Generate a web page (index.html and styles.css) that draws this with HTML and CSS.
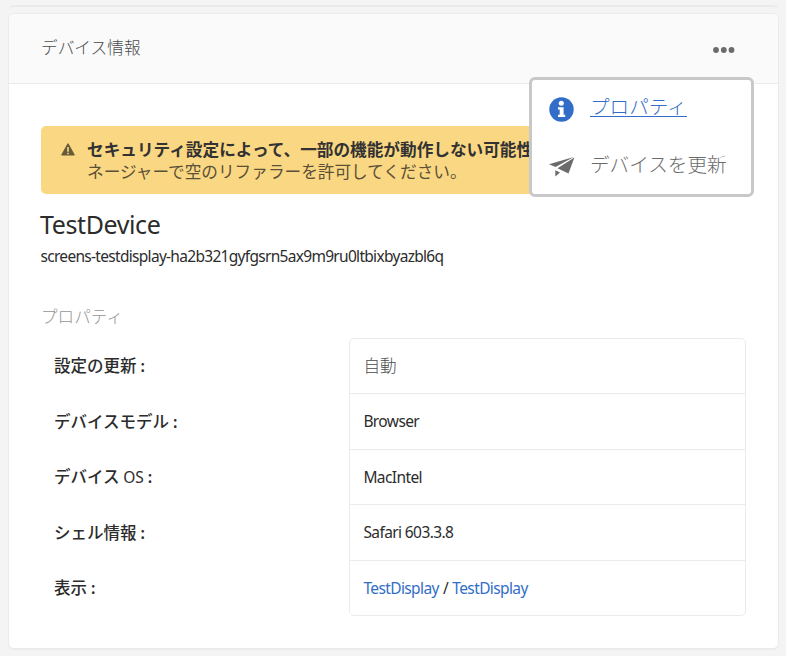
FILE: index.html
```html
<!DOCTYPE html>
<html lang="ja">
<head>
<meta charset="utf-8">
<title>デバイス情報</title>
<link rel="stylesheet" href="styles.css">
</head>
<body>
<div class="previous-card"></div>
<section class="card">
  <header class="card-header">
    <h2 class="card-title">デバイス情報</h2>
    <svg class="more" width="22" height="6" viewBox="0 0 22 6"><circle cx="3" cy="3" r="2.9"/><circle cx="10.8" cy="3" r="2.9"/><circle cx="18.5" cy="3" r="2.9"/></svg>
    <nav class="menu">
      <a class="menu-item active">
        <svg width="26" height="26" viewBox="0 0 26 26"><circle cx="12.5" cy="12.5" r="12.2" fill="#326ec8"/><circle cx="12.3" cy="6.3" r="2.5" fill="#fff"/><path d="M9 10.3h5.6v7.5h1.6V20H9v-2.200h1.700v-5.300H9z" fill="#fff"/></svg>
        <span class="menu-label">プロパティ</span>
      </a>
      <a class="menu-item">
        <svg width="26" height="26" viewBox="0 0 26 26"><path d="M0 10.3 24.700 3 6.600 13zM8.500 14.300 25.400 3.400 19.500 19.500zM6.200 16.200l4.800 2.300-4.600 4z" fill="#6b6b6b"/></svg>
        <span class="menu-label">デバイスを更新</span>
      </a>
    </nav>
  </header>
  <div class="card-body">
    <div class="alert">
      <svg class="alert-icon" width="14" height="13" viewBox="0 0 14 13"><path d="M6.400.700q.600-1 1.200 0l6 10.800q.500 1-.600 1H1q-1.100 0-.600-1z" fill="#665a38"/><path d="M6.200 4h1.600v4.700H6.200zM6.200 9.700h1.600v1.600H6.200z" fill="#fad782"/></svg>
      <div class="alert-text">
        <strong>セキュリティ設定によって、一部の機能が動作しない可能性</strong>
        <p>ネージャーで空のリファラーを許可してください。</p>
      </div>
    </div>
    <h1 class="device-name">TestDevice</h1>
    <p class="device-id">screens-testdisplay-ha2b321gyfgsrn5ax9m9ru0ltbixbyazbl6q</p>
    <h3 class="section-title">プロパティ</h3>
    <div class="properties">
      <div class="labels">
        <div class="label">設定の更新 :</div>
        <div class="label">デバイスモデル :</div>
        <div class="label">デバイス <span class="os">OS</span> :</div>
        <div class="label">シェル情報 :</div>
        <div class="label">表示 :</div>
      </div>
      <div class="values">
        <div class="value auto">自動</div>
        <div class="value">Browser</div>
        <div class="value">MacIntel</div>
        <div class="value">Safari 603.3.8</div>
        <div class="value links"><a>TestDisplay</a> / <a>TestDisplay</a></div>
      </div>
    </div>
  </div>
</section>
</body>
</html>
```

FILE: styles.css
```css
* { box-sizing: border-box; }
body {
  margin: 0;
  height: 656px;
  padding: 5px 7px 6px 8px;
  background: #f4f4f4;
  color: #2c2c2c;
  font-family: "Noto Sans", "Noto Sans CJK JP", sans-serif;
  font-size: 15.5px;
  overflow: hidden;
}
h1, h2, h3, p { margin: 0; font-weight: 400; }
.previous-card {
  height: 8px;
  margin: 0 1px;
  border-top: 2px solid #eaeaea;
  border-radius: 5px 5px 0 0;
}
.card {
  height: 637px;
  border: 1px solid #ebebeb;
  border-bottom-width: 2px;
  border-radius: 6px;
  background: #fff;
}
.card-header {
  position: relative;
  display: flex;
  align-items: center;
  justify-content: space-between;
  height: 70px;
  padding: 0 43.5px 0 32px;
  border-bottom: 1px solid #ebebeb;
  border-radius: 5px 5px 0 0;
  background: #fafafa;
}
.card-title {
  padding-bottom: 3px;
  font: 300 16.7px/24px "Noto Sans CJK JP", sans-serif;
  color: #4b4b4b;
}
.more { fill: #6b6b6b; margin-top: 2px; }
.menu {
  position: absolute;
  top: 63px;
  left: 520px;
  z-index: 1;
  width: 225px;
  height: 120px;
  padding: 17px 17px 0;
  border: 3px solid #c8c8c8;
  border-radius: 6px;
  background: #fff;
}
.menu-item {
  display: flex;
  gap: 15px;
  height: 57px;
  font: 300 19.6px/20px "Noto Sans CJK JP", sans-serif;
  color: #6b6b6b;
}
.menu-item.active { color: #326ec8; }
.active .menu-label {
  height: 20px;
  line-height: 18px;
  border-bottom: 1px solid #326ec8;
}
.card-body { padding: 42px 32px 0 32px; }
.alert {
  display: flex;
  gap: 12px;
  height: 68px;
  padding: 12px 0 0 20px;
  border-radius: 5px;
  background: #fad782;
  font: 300 16.65px/22px "Noto Sans CJK JP", sans-serif;
  color: #5a5038;
}
.alert-icon { margin-top: 5px; }
.alert-text strong { font-weight: 700; color: #323232; white-space: nowrap; }
.device-name { margin: 13px 0 0 -1px; font-size: 25px; line-height: 34px; letter-spacing: -0.4px; }
.device-id { margin: 4px 0 0 -0.5px; line-height: 22px; letter-spacing: -0.7px; }
.section-title {
  margin-top: 37px;
  font: 300 16.6px/24px "Noto Sans CJK JP", sans-serif;
  color: #969696;
}
.properties { display: flex; margin-top: 10px; }
.labels { width: 308px; padding: 0 0 0 13px; }
.label {
  height: 55.5px;
  font: 500 16.5px/54px "Noto Sans CJK JP", sans-serif;
}
.os { font-family: "Noto Sans", sans-serif; font-size: 15.5px; font-weight: 400; }
.values {
  width: 397px;
  height: 278px;
  border: 1px solid #ebebeb;
  border-radius: 5px;
}
.value {
  height: 55.4px;
  padding-left: 13.4px;
  border-bottom: 1px solid #ebebeb;
  line-height: 55px;
  letter-spacing: -0.6px;
}
.value:last-child { border-bottom: 0; }
.links { letter-spacing: -0.62px; word-spacing: 0.8px; }
.value a { color: #326ec8; }
.auto { font: 300 16.6px/52px "Noto Sans CJK JP", sans-serif; color: #4b4b4b; letter-spacing: 0; }
```
